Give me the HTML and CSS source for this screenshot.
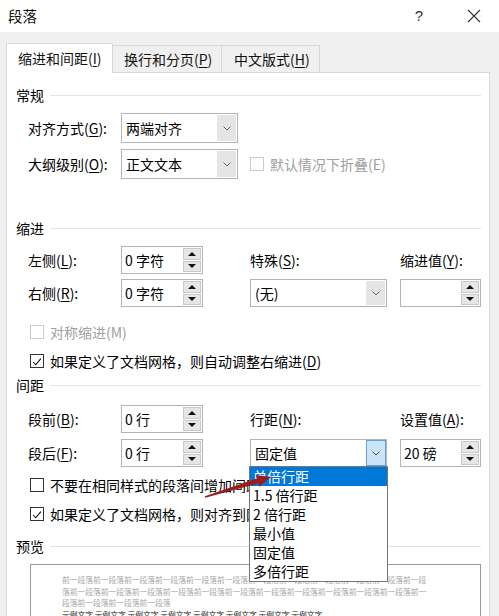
FILE: index.html
```html
<!DOCTYPE html>
<html lang="zh-CN">
<head>
<meta charset="utf-8">
<title>段落</title>
<link rel="stylesheet" href="styles.css">
</head>
<body>
<div class="titlebar">
  <span class="title">段落</span>
  <span class="help">?</span>
  <span class="close"><svg width="14" height="14" viewBox="0 0 14 14"><path d="M1 1 L13 13 M13 1 L1 13" stroke="#333" stroke-width="1.1" fill="none"/></svg></span>
</div>
<div class="frame">
  <div class="tabs">
    <div class="tab active">缩进和间距(<u>I</u>)</div>
    <div class="tab t2">换行和分页(<u>P</u>)</div>
    <div class="tab t3">中文版式(<u>H</u>)</div>
  </div>
  <div class="panel">
    <div class="heading">常规</div>
    <div class="grid g1">
      <div class="lbl">对齐方式(<u>G</u>):</div>
      <div class="select s1"><span class="val">两端对齐</span><span class="btn"><svg width="8" height="5" viewBox="0 0 8 5"><path d="M0.5 0.5 L4 4 L7.5 0.5" stroke="#666" fill="none"/></svg></span></div>
      <div></div><div></div>
      <div class="lbl">大纲级别(<u>O</u>):</div>
      <div class="select s1"><span class="val">正文文本</span><span class="btn"><svg width="8" height="5" viewBox="0 0 8 5"><path d="M0.5 0.5 L4 4 L7.5 0.5" stroke="#666" fill="none"/></svg></span></div>
      <div class="cb disabled span2"><span class="box"></span><span>默认情况下折叠(E)</span></div>
    </div>

    <div class="heading h2">缩进</div>
    <div class="grid g2">
      <div class="lbl">左侧(<u>L</u>):</div>
      <div class="spin"><span class="val">0 字符</span><span class="arrows"><span class="arr up"></span><span class="arr down"></span></span></div>
      <div class="lbl">特殊(<u>S</u>):</div>
      <div class="lbl">缩进值(<u>Y</u>):</div>
      <div class="lbl">右侧(<u>R</u>):</div>
      <div class="spin"><span class="val">0 字符</span><span class="arrows"><span class="arr up"></span><span class="arr down"></span></span></div>
      <div class="select s2"><span class="val">(无)</span><span class="btn"><svg width="8" height="5" viewBox="0 0 8 5"><path d="M0.5 0.5 L4 4 L7.5 0.5" stroke="#666" fill="none"/></svg></span></div>
      <div class="spin sp3"><span class="val"></span><span class="arrows"><span class="arr up"></span><span class="arr down"></span></span></div>
    </div>
    <div class="cb disabled c1"><span class="box"></span><span>对称缩进(M)</span></div>
    <div class="cb c2"><span class="box"><svg width="14" height="14" viewBox="0 0 14 14"><path d="M2.5 7 L5.5 10.2 L11.5 3" stroke="#000" stroke-width="1.2" fill="none"/></svg></span><span>如果定义了文档网格，则自动调整右缩进(<u>D</u>)</span></div>

    <div class="heading h3">间距</div>
    <div class="grid g3">
      <div class="lbl">段前(<u>B</u>):</div>
      <div class="spin"><span class="val">0 行</span><span class="arrows"><span class="arr up"></span><span class="arr down"></span></span></div>
      <div class="lbl">行距(<u>N</u>):</div>
      <div class="lbl">设置值(<u>A</u>):</div>
      <div class="lbl">段后(<u>F</u>):</div>
      <div class="spin"><span class="val">0 行</span><span class="arrows"><span class="arr up"></span><span class="arr down"></span></span></div>
      <div class="select s2 focus"><span class="val">固定值</span><span class="btn"><svg width="8" height="5" viewBox="0 0 8 5"><path d="M0.5 0.5 L4 4 L7.5 0.5" stroke="#555" fill="none"/></svg></span></div>
      <div class="spin sp3"><span class="val">20 磅</span><span class="arrows"><span class="arr up"></span><span class="arr down"></span></span></div>
    </div>
    <div class="cb c3"><span class="box"></span><span>不要在相同样式的段落间增加间距(<u>C</u>)</span></div>
    <div class="cb c4"><span class="box"><svg width="14" height="14" viewBox="0 0 14 14"><path d="M2.5 7 L5.5 10.2 L11.5 3" stroke="#000" stroke-width="1.2" fill="none"/></svg></span><span>如果定义了文档网格，则对齐到网格(<u>W</u>)</span></div>

    <div class="heading h4">预览</div>
    <div class="preview">
      <p class="prev">前一段落前一段落前一段落前一段落前一段落前一段落前一段落前一段落前一段落前一段落前一段落前一段落前一段落前一段落前一段落前一段落前一段落前一段落前一段落前一段落前一段落前一段落前一段落前一段落前一段落前一段落前一段落</p>
      <p class="sample">示例文字 示例文字 示例文字 示例文字 示例文字 示例文字 示例文字 示例文字</p>
    </div>
  </div>
</div>

<ul class="dropdown">
  <li class="sel">单倍行距</li>
  <li>1.5 倍行距</li>
  <li>2 倍行距</li>
  <li>最小值</li>
  <li>固定值</li>
  <li>多倍行距</li>
</ul>

<svg class="arrow" width="85" height="35" viewBox="0 0 85 35">
  <polygon points="9.8,26.2 61.9,8.5 60.9,5.1 76,7 64.3,16.7 63.3,13.3 10.2,27.8" fill="#9a1c1c"/>
</svg>
</body>
</html>
```

FILE: styles.css
```css
html, body {
  margin: 0;
  padding: 0;
}
body {
  width: 499px;
  height: 616px;
  overflow: hidden;
  background: #fff;
  color: #000;
  font-family: "Noto Sans CJK SC", "Liberation Sans", sans-serif;
  font-size: 14px;
  line-height: 20px;
}
u { text-decoration: underline; text-underline-offset: 2px; }

.titlebar {
  height: 32px;
  display: flex;
  align-items: center;
  background: #fff;
}
.title {
  margin-left: 8px;
  font-size: 14.5px;
  color: #111;
}
.help {
  margin-left: auto;
  width: 14px;
  text-align: center;
  font-size: 15px;
  color: #333;
  font-family: "Liberation Sans", sans-serif;
}
.close {
  margin-left: 41px;
  margin-right: 18px;
  width: 14px;
  height: 14px;
  display: flex;
}

.frame {
  background: #f0f0f0;
  height: 584px;
  overflow: hidden;
  padding: 11px 9px 0 6px;
  box-sizing: border-box;
}
.tabs {
  display: flex;
  align-items: flex-end;
  height: 29px;
}
.tab {
  box-sizing: border-box;
  height: 27px;
  padding-left: 11px;
  line-height: 26px;
  border-top: 1px solid #d9d9d9;
  border-right: 1px solid #d9d9d9;
  background: #f0f0f0;
  color: #111;
}
.tab.active {
  width: 107px;
  height: 30px;
  line-height: 29px;
  margin-bottom: -1px;
  position: relative;
  z-index: 1;
  background: #fff;
  border-left: 1px solid #d9d9d9;
  padding-left: 11px;
}
.t2 { width: 109px; }
.t3 { width: 98px; padding-left: 12px; }

.panel {
  background: #fff;
  border: 1px solid #d9d9d9;
  border-bottom: none;
  height: 544px;
  overflow: hidden;
  box-sizing: border-box;
  padding: 12px 8px 0 9px;
}
.heading {
  display: flex;
  align-items: center;
  height: 20px;
  gap: 6px;
}
.heading::after {
  content: "";
  flex: 1;
  height: 1px;
  background: #e3e3e3;
}
.h2 { margin-top: 39px; }
.h3 { margin-top: 4px; }
.h4 { margin-top: 12px; }

.grid {
  display: grid;
  grid-template-columns: 93px 129px 150px 81px;
  margin-left: 12px;
  align-items: center;
}
.g1 { grid-auto-rows: 30px; row-gap: 6px; margin-top: 8px; }
.g2 { grid-auto-rows: 28px; row-gap: 5px; margin-top: 8px; }
.g3 { grid-auto-rows: 28px; row-gap: 6px; margin-top: 10px; }

.lbl { white-space: nowrap; }

.select {
  box-sizing: border-box;
  height: 100%;
  border: 1px solid #b4b4b4;
  display: flex;
  background: #fff;
}
.s1 { width: 117px; }
.s2 { width: 137px; }
.select .val {
  flex: 1;
  padding-left: 4px;
  display: flex;
  align-items: center;
  white-space: nowrap;
}
.select .btn {
  width: 19px;
  margin: 1px;
  background: #e5e5e5;
  display: flex;
  align-items: center;
  justify-content: center;
}
.select.focus .btn {
  margin: 0;
  width: 20px;
  background: #cce4f7;
  border: 1px solid #6a9fd2;
  box-sizing: border-box;
}

.spin {
  box-sizing: border-box;
  width: 82px;
  height: 100%;
  border: 1px solid #b4b4b4;
  display: flex;
  background: #fff;
}
.sp3 { width: 81px; }
.spin .val {
  flex: 1;
  padding-left: 3px;
  display: flex;
  align-items: center;
  white-space: nowrap;
}
.arrows {
  width: 18px;
  margin: 1px 1px 1px 0;
  display: flex;
  flex-direction: column;
  gap: 1px;
}
.arr {
  flex: 1;
  background: #e6e6e6;
  border: 1px solid #c9c9c9;
  display: flex;
  align-items: center;
  justify-content: center;
}
.arr::before {
  content: "";
  width: 0;
  height: 0;
  border-left: 4px solid transparent;
  border-right: 4px solid transparent;
}
.arr.up::before { border-bottom: 4px solid #111; }
.arr.down::before { border-top: 4px solid #111; }

.cb {
  display: flex;
  align-items: center;
  gap: 6px;
  height: 20px;
  white-space: nowrap;
}
.cb .box {
  box-sizing: border-box;
  width: 14px;
  height: 14px;
  border: 1px solid #333;
  background: #fff;
  display: flex;
  flex: none;
}
.cb.disabled { color: #a0a0a0; }
.cb.disabled .box { border-color: #cccccc; }
.span2 { grid-column: 3 / 5; }
.c1, .c2, .c3, .c4 { margin-left: 14px; }
.c1 { margin-top: 15px; }
.c2 { margin-top: 9px; }
.c3 { margin-top: 8px; }
.c4 { margin-top: 9px; }

.preview {
  margin-top: 8px;
  margin-left: 14px;
  height: 53px;
  box-sizing: border-box;
  overflow: hidden;
  border: 1px solid #9a9a9a;
  border-bottom: none;
  padding: 9px 0 0 31px;
  font-size: 7.75px;
  line-height: 11.6px;
}
.preview p {
  margin: 0;
  width: 366px;
}
.prev { color: #a8a8a8; }
.sample { color: #222; }

.dropdown {
  position: absolute;
  left: 249px;
  top: 466px;
  width: 139px;
  box-sizing: border-box;
  margin: 0;
  padding: 0;
  list-style: none;
  background: #fff;
  border: 1px solid #767676;
}
.dropdown li {
  height: 19px;
  line-height: 19px;
  padding-left: 3px;
  white-space: nowrap;
}
.dropdown li.sel {
  background: #0078d7;
  color: #fff;
}

.arrow {
  position: absolute;
  left: 195px;
  top: 470px;
}
```
